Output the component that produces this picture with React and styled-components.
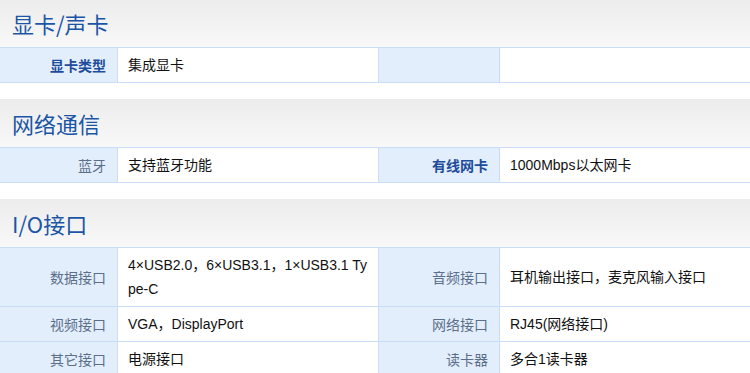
import React from 'react'
import styled, { createGlobalStyle } from 'styled-components'

const GlobalStyle = createGlobalStyle`
  html, body {
    margin: 0;
    padding: 0;
    background: #fff;
  }
  body {
    font-family: 'Liberation Sans', 'Noto Sans CJK SC', sans-serif;
    font-size: 14px;
  }
`

const sections = [
  {
    title: '显卡/声卡',
    rows: [
      [{ label: '显卡类型', value: '集成显卡', strong: true }, { label: '', value: '' }],
    ],
  },
  {
    title: '网络通信',
    rows: [
      [
        { label: '蓝牙', value: '支持蓝牙功能' },
        { label: '有线网卡', value: '1000Mbps以太网卡', strong: true },
      ],
    ],
  },
  {
    title: 'I/O接口',
    rows: [
      [
        { label: '数据接口', value: '4×USB2.0，6×USB3.1，1×USB3.1 Type-C' },
        { label: '音频接口', value: '耳机输出接口，麦克风输入接口' },
      ],
      [
        { label: '视频接口', value: 'VGA，DisplayPort' },
        { label: '网络接口', value: 'RJ45(网络接口)' },
      ],
      [
        { label: '其它接口', value: '电源接口' },
        { label: '读卡器', value: '多合1读卡器' },
      ],
    ],
  },
]

const App = () => {
  return (
    <Wrapper>
      <GlobalStyle />
      {sections.map((section) => (
        <Section key={section.title}>
          <SectionTitle>{section.title}</SectionTitle>
          <Grid>
            {section.rows.map((row, i) =>
              row.map((cell, j) => (
                <React.Fragment key={`${i}-${j}`}>
                  <LabelCell $strong={cell.strong}>{cell.label}</LabelCell>
                  <ValueCell $last={j === row.length - 1}>
                    <span>{cell.value}</span>
                  </ValueCell>
                </React.Fragment>
              ))
            )}
          </Grid>
        </Section>
      ))}
    </Wrapper>
  )
}

const Wrapper = styled.div`
  width: 750px;
  margin-top: -1px;
`

const Section = styled.section`
  margin-bottom: 16px;
`

const SectionTitle = styled.h2`
  margin: 0;
  height: 48px;
  line-height: 48px;
  padding-left: 12px;
  font-family: 'Noto Sans CJK SC', 'Liberation Sans', sans-serif;
  font-size: 22px;
  font-weight: normal;
  color: #1b56a6;
  background: linear-gradient(to bottom, #ececec, #f8f8f8);
`

const Grid = styled.div`
  display: grid;
  grid-template-columns: 118px 261px 121px 1fr;
  border-top: 1px solid #c9ddf6;
`

const LabelCell = styled.div`
  box-sizing: border-box;
  display: flex;
  align-items: center;
  justify-content: flex-end;
  padding: 5px 11px 5px 8px;
  min-height: 35px;
  line-height: 24px;
  background: #e3eefc;
  border-right: 1px solid #c9ddf6;
  border-bottom: 1px solid #c9ddf6;
  font-family: 'Noto Sans CJK SC', sans-serif;
  font-weight: ${(p) => (p.$strong ? 'bold' : 'normal')};
  color: ${(p) => (p.$strong ? '#1d4c9a' : '#5b6f8a')};
`

const ValueCell = styled.div`
  box-sizing: border-box;
  display: flex;
  align-items: center;
  padding: 5px 10px;
  min-height: 35px;
  line-height: 24px;
  color: #111;
  word-break: break-all;
  border-right: ${(p) => (p.$last ? 'none' : '1px solid #c9ddf6')};
  border-bottom: 1px solid #c9ddf6;
`

export default App
